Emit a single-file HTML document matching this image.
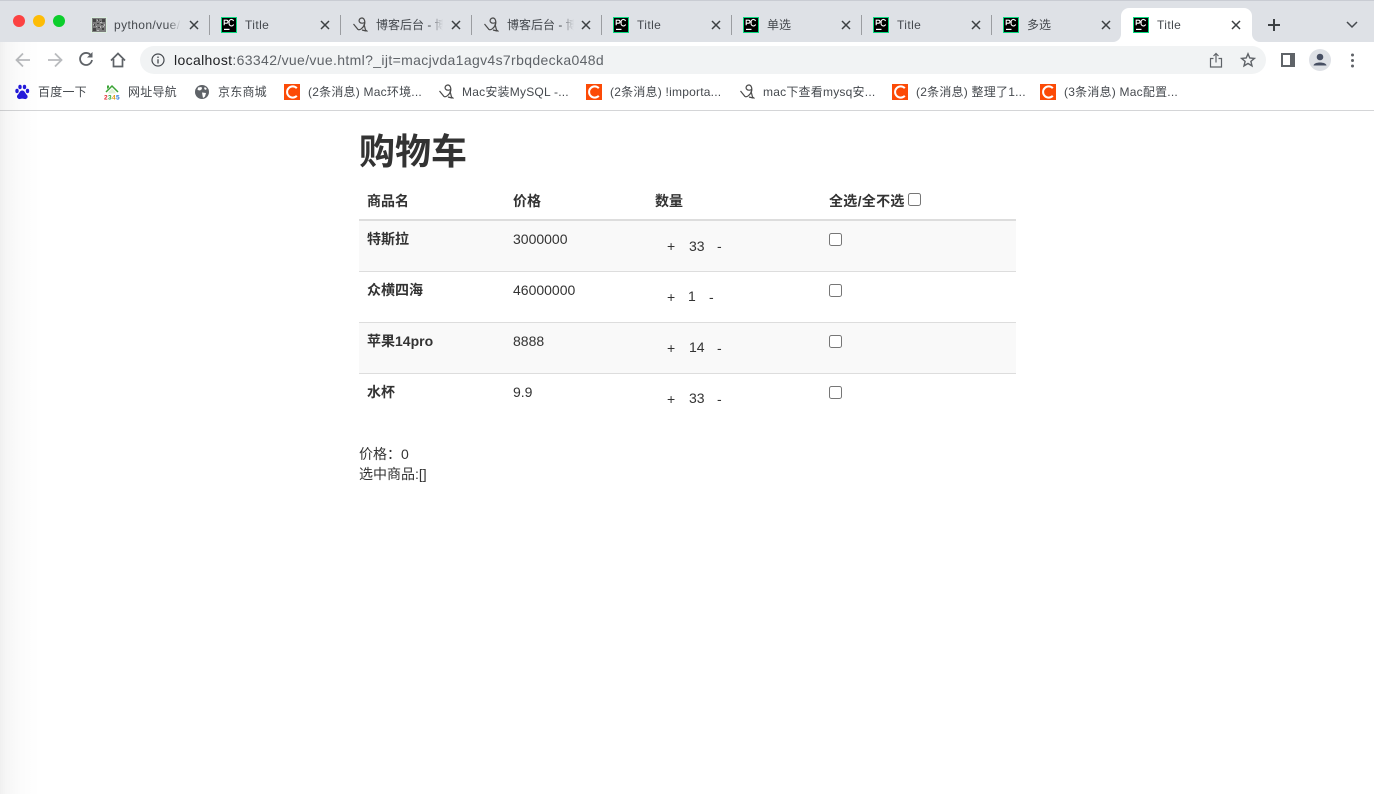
<!DOCTYPE html>
<html lang="zh">
<head>
<meta charset="utf-8">
<title>Title</title>
<style>
html,body{margin:0;padding:0;width:1374px;height:794px;overflow:hidden;background:#fff}
body{position:relative;font-family:"Liberation Sans","Noto Sans CJK SC",sans-serif;color:#333}
.a{position:absolute}
.t{position:absolute;white-space:nowrap;line-height:20px}
.tab{font-size:12px;top:15px;color:#45494e;overflow:hidden}
.ls{letter-spacing:.4px}
.fade{-webkit-mask-image:linear-gradient(90deg,#000 80%,transparent);mask-image:linear-gradient(90deg,#000 80%,transparent)}
.sep{position:absolute;top:15px;width:1px;height:20px;background:#9b9da1}
.bm{font-size:12px;top:82px;color:#45494e;letter-spacing:.22px}
.fi{position:absolute;top:17px;width:16px;height:16px}
.x{position:absolute;top:20px;width:10px;height:10px}
.bi{position:absolute;top:84px;width:16px;height:16px}
.p{font-size:14px;color:#333}
.b{font-weight:bold}
input{position:absolute;margin:0;width:13px;height:13px}
.line{position:absolute;left:359px;width:657px;height:1px;background:#ddd}
</style>
</head>
<body>
<svg width="0" height="0" style="position:absolute">
<defs>
<symbol id="pc" viewBox="0 0 16 16">
<rect width="16" height="16" fill="#08d97f"/>
<rect x="1" y="1" width="14" height="14" fill="#000"/>
<path d="M3.200 8.200V3.200H5.500a1.500 1.500 0 0 1 0 3H3.200M12.600 4A2.200 2.200 0 0 0 8.200 5.700 2.200 2.200 0 0 0 12.600 7.400" fill="none" stroke="#fff" stroke-width="1.100"/>
<rect x="3" y="11.800" width="5.500" height="1.200" fill="#fff"/>
</symbol>
<symbol id="xx" viewBox="0 0 10 10">
<path d="M1 1L9 9M9 1L1 9" stroke="#3c4043" stroke-width="1.500" fill="none"/>
</symbol>
<symbol id="swirl" viewBox="0 0 16 16">
<path d="M0.500 7L5 12.500C7 13.500 10 11 11.500 7.500C12.500 4 11 1 9 1C6.500 1 5.500 3.500 6.500 5C7.500 6.500 10 6.500 11.500 5.500M11 7L12.500 13L14.500 14.500M9 13L13 14" fill="none" stroke="#4a4a4a" stroke-width="1.200"/>
</symbol>
<symbol id="cc" viewBox="0 0 16 16">
<rect width="16" height="16" fill="#fc4a06"/>
<path d="M12.800 4.200A5.600 5.600 0 1 0 12.800 11.800" fill="none" stroke="#fff" stroke-width="2"/>
</symbol>
</defs>
</svg>

<!-- tab strip -->
<div class="a" style="left:0;top:0;width:1374px;height:42px;background:#dee1e6"></div>
<div class="a" style="left:0;top:0;width:1374px;height:1px;background:#c9ccd3"></div>
<div class="a" style="left:13px;top:15px;width:12px;height:12px;border-radius:50%;background:#fc4242"></div>
<div class="a" style="left:33px;top:15px;width:12px;height:12px;border-radius:50%;background:#fdbc06"></div>
<div class="a" style="left:53px;top:15px;width:12px;height:12px;border-radius:50%;background:#0cce2c"></div>

<!-- active tab -->
<div class="a" style="left:1121px;top:8px;width:131px;height:34px;background:#fff;border-radius:8px 8px 0 0"></div>
<svg class="a" style="left:1113px;top:34px" width="8" height="8"><path d="M8 0V8H0A8 8 0 0 0 8 0Z" fill="#fff"/></svg>
<svg class="a" style="left:1252px;top:34px" width="8" height="8"><path d="M0 0V8H8A8 8 0 0 1 0 0Z" fill="#fff"/></svg>

<!-- favicon 1 -->
<svg class="fi" style="left:91px" viewBox="0 0 16 16">
<rect width="16" height="16" fill="#dcefe0"/>
<rect x="1" y="1" width="14" height="14" fill="#7d7d7d"/>
<path d="M2 2h3v3H2zM11 2h3v3h-3zM2 11h3v3H2zM7 2h1v2H7zM6 6h2v1H6zM10 7h2v1h-2zM7 10h2v1H7zM11 11h2v2h-2zM3 7h1v2H3zM9 4h1v1H9z" fill="#444"/>
<path d="M6 3h1v1H6zM2 7h1v1H2zM9 5h2v1H9zM13 7h1v2h-1zM6 13h2v1H6zM9 9h1v2H9zM5 9h1v1H5zM12 9h1v1h-1z" fill="#bbb"/>
</svg>
<div class="t tab fade ls" style="left:114px;width:67px">python/vue/</div>
<svg class="x" style="left:189px"><use href="#xx"/></svg>
<div class="sep" style="left:209px"></div>

<svg class="fi" style="left:221px"><use href="#pc"/></svg>
<div class="t tab ls" style="left:245px">Title</div>
<svg class="x" style="left:320px"><use href="#xx"/></svg>
<div class="sep" style="left:340px"></div>

<svg class="fi" style="left:353px"><use href="#swirl"/></svg>
<div class="t tab fade" style="left:376px;width:67px">博客后台 - 博客</div>
<svg class="x" style="left:451px"><use href="#xx"/></svg>
<div class="sep" style="left:471px"></div>

<svg class="fi" style="left:484px"><use href="#swirl"/></svg>
<div class="t tab fade" style="left:507px;width:67px">博客后台 - 博客</div>
<svg class="x" style="left:581px"><use href="#xx"/></svg>
<div class="sep" style="left:601px"></div>

<svg class="fi" style="left:613px"><use href="#pc"/></svg>
<div class="t tab ls" style="left:637px">Title</div>
<svg class="x" style="left:711px"><use href="#xx"/></svg>
<div class="sep" style="left:731px"></div>

<svg class="fi" style="left:743px"><use href="#pc"/></svg>
<div class="t tab" style="left:767px">单选</div>
<svg class="x" style="left:841px"><use href="#xx"/></svg>
<div class="sep" style="left:861px"></div>

<svg class="fi" style="left:873px"><use href="#pc"/></svg>
<div class="t tab ls" style="left:897px">Title</div>
<svg class="x" style="left:971px"><use href="#xx"/></svg>
<div class="sep" style="left:991px"></div>

<svg class="fi" style="left:1003px"><use href="#pc"/></svg>
<div class="t tab" style="left:1027px">多选</div>
<svg class="x" style="left:1101px"><use href="#xx"/></svg>

<svg class="fi" style="left:1133px"><use href="#pc"/></svg>
<div class="t tab ls" style="left:1157px">Title</div>
<svg class="x" style="left:1231px"><use href="#xx"/></svg>

<svg class="a" style="left:1267px;top:18px" width="14" height="14"><path d="M7 1V13M1 7H13" stroke="#3c4043" stroke-width="2" fill="none"/></svg>
<svg class="a" style="left:1346px;top:21px" width="12" height="8"><path d="M1 1L6 6L11 1" stroke="#45494e" stroke-width="1.500" fill="none"/></svg>

<!-- toolbar -->
<svg class="a" style="left:14px;top:51px" width="18" height="18"><path d="M16 9H2.500M9 2.500L2.500 9L9 15.500" stroke="#b9bbbe" stroke-width="1.800" fill="none"/></svg>
<svg class="a" style="left:46px;top:51px" width="18" height="18"><path d="M2 9H15.500M9 2.500L15.500 9L9 15.500" stroke="#b9bbbe" stroke-width="1.800" fill="none"/></svg>
<svg class="a" style="left:78px;top:51px" width="16" height="16"><path d="M13 4.500A6 6 0 1 0 14 9" stroke="#5f6368" stroke-width="1.800" fill="none"/><path d="M14.500 1V6.500H9Z" fill="#5f6368"/></svg>
<svg class="a" style="left:109px;top:51px" width="18" height="18"><path d="M2 9.500L9 2.500L16 9.500M4.500 8V15.500H13.500V8" stroke="#5f6368" stroke-width="1.700" fill="none"/></svg>
<div class="a" style="left:140px;top:46px;width:1126px;height:28px;border-radius:14px;background:#f1f3f4"></div>
<svg class="a" style="left:151px;top:53px" width="14" height="14"><circle cx="7" cy="7" r="6" stroke="#45494e" stroke-width="1.200" fill="none"/><path d="M7 6.200V10.500M7 3.500V5" stroke="#45494e" stroke-width="1.300"/></svg>
<div class="t" style="left:174px;top:50px;font-size:14px;letter-spacing:.35px;color:#5f6368"><span style="color:#202124">localhost</span>:63342/vue/vue.html?_ijt=macjvda1agv4s7rbqdecka048d</div>
<svg class="a" style="left:1209px;top:52px" width="14" height="16"><path d="M4.500 6.500H1.500V15H12.500V6.500H9.500M7 10.500V1.500M4.500 4L7 1.500L9.500 4" stroke="#5f6368" stroke-width="1.200" fill="none"/></svg>
<svg class="a" style="left:1240px;top:52px" width="16" height="16"><path d="M8 1.800L9.800 6L14.400 6.400L10.900 9.400L12 13.900L8 11.500L4 13.900L5.100 9.400L1.600 6.400L6.200 6Z" stroke="#5f6368" stroke-width="1.400" fill="none"/></svg>
<svg class="a" style="left:1281px;top:53px" width="14" height="14"><rect width="14" height="14" fill="#5f6368"/><rect x="2" y="2" width="7" height="10" fill="#fff"/></svg>
<div class="a" style="left:1309px;top:49px;width:22px;height:22px;border-radius:50%;background:#dee1e6"></div>
<svg class="a" style="left:1309px;top:49px" width="22" height="22"><circle cx="11" cy="8" r="3.300" fill="#474f63"/><path d="M4.500 16.500C5 12.500 17 12.500 17.500 16.500Z" fill="#474f63"/></svg>
<svg class="a" style="left:1350px;top:53px" width="5" height="15"><circle cx="2.500" cy="2" r="1.500" fill="#5f6368"/><circle cx="2.500" cy="7.500" r="1.500" fill="#5f6368"/><circle cx="2.500" cy="13" r="1.500" fill="#5f6368"/></svg>

<!-- bookmarks -->
<svg class="bi" style="left:14px" viewBox="0 0 16 16">
<g fill="#2319dc"><ellipse cx="3" cy="7" rx="1.700" ry="2.200"/><ellipse cx="6" cy="3" rx="1.700" ry="2.200"/><ellipse cx="10.500" cy="3" rx="1.700" ry="2.200"/><ellipse cx="13.500" cy="7" rx="1.700" ry="2.200"/><path d="M8.200 6.500C5.500 6.500 5.500 9.500 3.500 11 2 13 4 15.500 6 15 7.500 14.500 9 14.500 10.500 15 13 15.500 14.500 13 13 11 11 9.500 11 6.500 8.200 6.500Z"/></g>
</svg>
<div class="t bm" style="left:38px">百度一下</div>
<svg class="bi" style="left:104px" viewBox="0 0 16 16">
<path d="M2 8L8 2L14 8" stroke="#3aa335" stroke-width="1.500" fill="none"/><path d="M3 5V1.500H5V3.500Z" fill="#3aa335"/><path d="M4.500 8L8 4.500 11.500 8V9.500H4.500Z" fill="#dff2d8"/>
<text x="0" y="15.500" font-size="6.500" font-weight="bold" font-family="Liberation Sans, sans-serif"><tspan fill="#e3202a">2</tspan><tspan fill="#27a838" x="4">3</tspan><tspan fill="#e09a10" x="8">4</tspan><tspan fill="#1c6fd8" x="12">5</tspan></text>
</svg>
<div class="t bm" style="left:128px">网址导航</div>
<svg class="bi" style="left:194px" viewBox="0 0 16 16">
<circle cx="8" cy="8" r="7" fill="#5f6368"/><path d="M4 3.500L7.500 3 8 5 6 6.500 3.500 6ZM8 8.500L12 9 11 12.500 9 14 8.500 11.500ZM11 3L13 5 11 6 10 4Z" fill="#fff"/>
</svg>
<div class="t bm" style="left:218px">京东商城</div>
<svg class="bi" style="left:284px"><use href="#cc"/></svg>
<div class="t bm" style="left:308px">(2条消息) Mac环境...</div>
<svg class="bi" style="left:439px"><use href="#swirl"/></svg>
<div class="t bm" style="left:462px">Mac安装MySQL -...</div>
<svg class="bi" style="left:586px"><use href="#cc"/></svg>
<div class="t bm" style="left:610px">(2条消息) !importa...</div>
<svg class="bi" style="left:740px"><use href="#swirl"/></svg>
<div class="t bm" style="left:763px">mac下查看mysq安...</div>
<svg class="bi" style="left:892px"><use href="#cc"/></svg>
<div class="t bm" style="left:916px">(2条消息) 整理了1...</div>
<svg class="bi" style="left:1040px"><use href="#cc"/></svg>
<div class="t bm" style="left:1064px">(3条消息) Mac配置...</div>

<div class="a" style="left:0;top:110px;width:1374px;height:1px;background:#d4d5d7"></div>

<!-- page -->
<div class="t b" style="left:359px;top:132px;font-size:36px;line-height:40px">购物车</div>

<div class="a" style="left:359px;top:221px;width:657px;height:50px;background:#f9f9f9"></div>
<div class="a" style="left:359px;top:323px;width:657px;height:50px;background:#f9f9f9"></div>
<div class="a" style="left:359px;top:219px;width:657px;height:2px;background:#ddd"></div>
<div class="line" style="top:271px"></div>
<div class="line" style="top:322px"></div>
<div class="line" style="top:373px"></div>

<div class="t p b" style="left:367px;top:191px">商品名</div>
<div class="t p b" style="left:513px;top:191px">价格</div>
<div class="t p b" style="left:655px;top:191px">数量</div>
<div class="t p b" style="left:829px;top:191px;letter-spacing:.3px">全选/全不选</div>
<input type="checkbox" style="left:908px;top:193px">

<div class="t p b" style="left:367px;top:229px">特斯拉</div>
<div class="t p" style="left:513px;top:229px">3000000</div>
<div class="t p" style="left:667px;top:236px">+</div>
<div class="t p" style="left:689px;top:236px">33</div>
<div class="t p" style="left:717px;top:236px">-</div>
<input type="checkbox" style="left:829px;top:233px">

<div class="t p b" style="left:367px;top:280px">众横四海</div>
<div class="t p" style="left:513px;top:280px">46000000</div>
<div class="t p" style="left:667px;top:287px">+</div>
<div class="t p" style="left:688px;top:286px">1</div>
<div class="t p" style="left:709px;top:287px">-</div>
<input type="checkbox" style="left:829px;top:284px">

<div class="t p b" style="left:367px;top:331px">苹果14pro</div>
<div class="t p" style="left:513px;top:331px">8888</div>
<div class="t p" style="left:667px;top:338px">+</div>
<div class="t p" style="left:689px;top:337px">14</div>
<div class="t p" style="left:717px;top:338px">-</div>
<input type="checkbox" style="left:829px;top:335px">

<div class="t p b" style="left:367px;top:382px">水杯</div>
<div class="t p" style="left:513px;top:382px">9.9</div>
<div class="t p" style="left:667px;top:389px">+</div>
<div class="t p" style="left:689px;top:388px">33</div>
<div class="t p" style="left:717px;top:389px">-</div>
<input type="checkbox" style="left:829px;top:386px">

<div class="t p" style="left:359px;top:444px">价格：</div>
<div class="t p" style="left:401px;top:444px">0</div>
<div class="t p" style="left:359px;top:464px">选中商品:[]</div>

<!-- left window shading -->
<div class="a" style="left:0;top:42px;width:40px;height:752px;background:linear-gradient(90deg,rgba(0,0,0,.06),rgba(0,0,0,.035) 15%,rgba(0,0,0,.012) 55%,rgba(0,0,0,0));pointer-events:none"></div>
</body>
</html>
